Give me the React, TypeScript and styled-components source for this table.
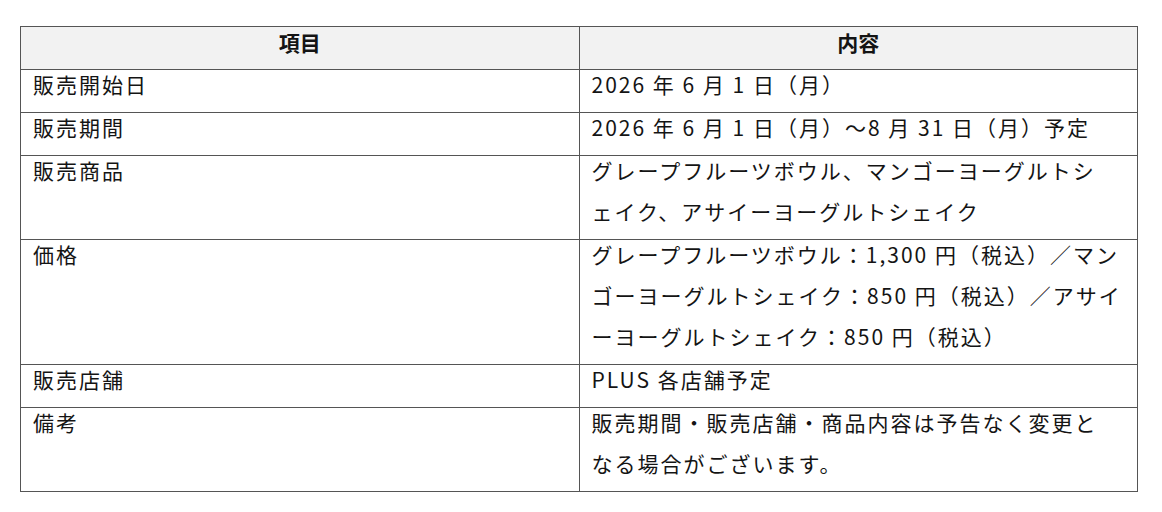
import styled, { createGlobalStyle } from 'styled-components';

const GlobalStyle = createGlobalStyle`
  html, body {
    margin: 0;
    padding: 0;
    background: #ffffff;
  }
  body {
    font-family: "Noto Sans CJK JP", "Noto Sans", sans-serif;
    color: #141414;
  }
`;

const Page = styled.div`
  padding: 26px 0 0 20px;
`;

const Table = styled.table`
  width: 1118px;
  border-collapse: collapse;
  table-layout: fixed;
  border: 1px solid #555555;
`;

const HeadCell = styled.th`
  width: 50%;
  background: #f2f2f2;
  border: 1px solid #555555;
  font-size: 21px;
  font-weight: 700;
  line-height: 30px;
  padding: 0 12px 12px;
  text-align: center;
`;

const Cell = styled.td`
  border: 1px solid #555555;
  font-size: 21px;
  font-weight: 400;
  letter-spacing: 2px;
  padding: 0 12px 1px;
  vertical-align: top;
  text-align: left;
  white-space: nowrap;
`;

// 行ごとに 41px、文字は上寄せ
const Line = styled.div`
  line-height: 28px;
  padding-bottom: 13px;
`;

type Row = { label: string; lines: string[] };

const rows: Row[] = [
  { label: '販売開始日', lines: ['2026 年 6 月 1 日（月）'] },
  { label: '販売期間', lines: ['2026 年 6 月 1 日（月）～8 月 31 日（月）予定'] },
  {
    label: '販売商品',
    lines: ['グレープフルーツボウル、マンゴーヨーグルトシ', 'ェイク、アサイーヨーグルトシェイク'],
  },
  {
    label: '価格',
    lines: [
      'グレープフルーツボウル：1,300 円（税込）／マン',
      'ゴーヨーグルトシェイク：850 円（税込）／アサイ',
      'ーヨーグルトシェイク：850 円（税込）',
    ],
  },
  { label: '販売店舗', lines: ['PLUS 各店舗予定'] },
  {
    label: '備考',
    lines: ['販売期間・販売店舗・商品内容は予告なく変更と', 'なる場合がございます。'],
  },
];

const App = () => {
  return (
    <>
      <GlobalStyle />
      <Page>
        <Table>
          <thead>
            <tr>
              <HeadCell>項目</HeadCell>
              <HeadCell>内容</HeadCell>
            </tr>
          </thead>
          <tbody>
            {rows.map(row => (
              <tr key={row.label}>
                <Cell>
                  <Line>{row.label}</Line>
                </Cell>
                <Cell>
                  {row.lines.map((line, i) => (
                    <Line key={i}>{line}</Line>
                  ))}
                </Cell>
              </tr>
            ))}
          </tbody>
        </Table>
      </Page>
    </>
  );
};

export default App;
